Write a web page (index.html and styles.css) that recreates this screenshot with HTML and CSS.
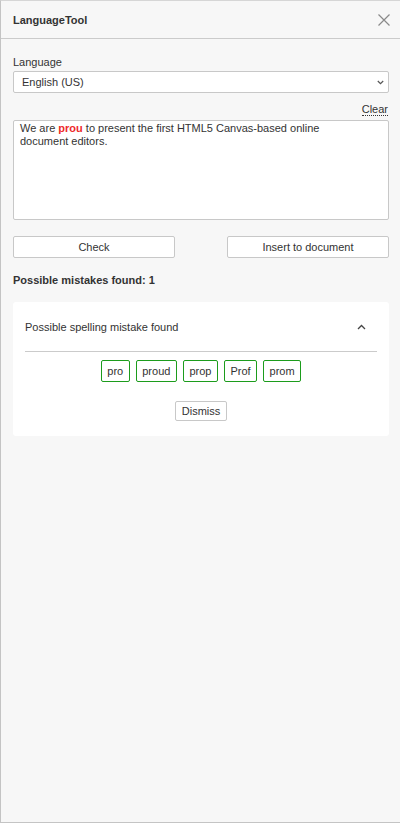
FILE: index.html
```html
<!DOCTYPE html>
<html>
<head>
<meta charset="utf-8">
<link rel="stylesheet" href="styles.css">
</head>
<body>
<div class="panel">
  <header class="header">
    <span class="title">LanguageTool</span>
    <svg class="close" width="12" height="12" viewBox="0 0 12 12"><path d="M0.5 0.5 L11.5 11.5 M11.5 0.5 L0.5 11.5" stroke="#8a8a8a" stroke-width="1.2" fill="none"/></svg>
  </header>
  <main class="body">
    <div class="label">Language</div>
    <div class="select">
      <span>English (US)</span>
      <svg class="chev" width="7" height="5" viewBox="0 0 7 5"><path d="M0.8 1 L3.5 3.7 L6.2 1" stroke="#555" stroke-width="1.2" fill="none"/></svg>
    </div>
    <div class="clear-row"><span class="clear">Clear</span></div>
    <div class="textarea">We are <span class="err">prou</span> to present the first HTML5 Canvas-based online<br>document editors.</div>
    <div class="actions">
      <div class="btn">Check</div>
      <div class="btn">Insert to document</div>
    </div>
    <div class="found">Possible mistakes found: 1</div>
    <section class="card">
      <div class="card-head">
        <span>Possible spelling mistake found</span>
        <svg class="caret" width="9" height="6" viewBox="0 0 9 6"><path d="M1 5 L4.5 1.5 L8 5" stroke="#444" stroke-width="1.3" fill="none"/></svg>
      </div>
      <div class="suggestions">
        <div class="sug">pro</div>
        <div class="sug">proud</div>
        <div class="sug">prop</div>
        <div class="sug">Prof</div>
        <div class="sug">prom</div>
      </div>
      <div class="dismiss-row"><div class="dismiss">Dismiss</div></div>
    </section>
  </main>
</div>
</body>
</html>
```

FILE: styles.css
```css
* { box-sizing: border-box; }
html, body { margin: 0; padding: 0; }
body {
  font-family: "Liberation Sans", Arial, sans-serif;
  font-size: 11px;
  color: #333;
  background: #f7f7f7;
}
.panel {
  width: 400px;
  height: 823px;
  border-left: 1px solid #c4c4c4;
  border-top: 1px solid #d6d6d6;
  border-bottom: 1px solid #c4c4c4;
  background: #f7f7f7;
  display: flex;
  flex-direction: column;
}
.header {
  height: 38px;
  border-bottom: 1px solid #cbcbcb;
  display: flex;
  align-items: center;
  justify-content: space-between;
  padding: 0 10px 0 12px;
}
.title {
  font-weight: bold;
  font-size: 11px;
  color: #333;
}
.close { display: block; }
.body {
  padding: 16px 11px 0 12px;
}
.label {
  height: 14px;
  line-height: 14px;
  margin-bottom: 2px;
  color: #333;
}
.select {
  height: 22px;
  background: #fff;
  border: 1px solid #c8c8c8;
  border-radius: 2px;
  display: flex;
  align-items: center;
  justify-content: space-between;
  padding: 0 4px 0 8px;
  color: #333;
}
.clear-row {
  display: flex;
  justify-content: flex-end;
  padding-right: 1px;
  height: 27px;
  align-items: flex-end;
  padding-bottom: 4px;
}
.clear {
  line-height: 12px;
  border-bottom: 1px dotted #333;
  color: #333;
}
.textarea {
  height: 100px;
  background: #fff;
  border: 1px solid #c8c8c8;
  border-radius: 2px;
  padding: 1px 6px;
  line-height: 13px;
  color: #333;
}
.err {
  color: #ee2a2a;
  font-weight: bold;
}
.actions {
  display: flex;
  justify-content: space-between;
  margin-top: 16px;
}
.btn {
  width: 162px;
  height: 22px;
  background: #fff;
  border: 1px solid #c8c8c8;
  border-radius: 2px;
  display: flex;
  align-items: center;
  justify-content: center;
  color: #333;
}
.found {
  font-weight: bold;
  margin-top: 15px;
  line-height: 14px;
}
.card {
  margin-top: 15px;
  background: #fff;
  border-radius: 3px;
  padding: 0 12px 15px 12px;
}
.card-head {
  height: 50px;
  display: flex;
  align-items: center;
  justify-content: space-between;
  padding-right: 11px;
  border-bottom: 1px solid #cbcbcb;
}
.caret { display: block; }
.suggestions {
  display: flex;
  justify-content: center;
  gap: 6px;
  margin-top: 8px;
}
.sug {
  height: 22px;
  padding: 0 5.5px;
  border: 1px solid #1c9c1c;
  border-radius: 2px;
  display: flex;
  align-items: center;
  color: #333;
}
.dismiss-row {
  display: flex;
  justify-content: center;
  margin-top: 19px;
}
.dismiss {
  height: 20px;
  padding: 0 6px;
  border: 1px solid #c8c8c8;
  border-radius: 2px;
  display: flex;
  align-items: center;
  color: #333;
}
```
